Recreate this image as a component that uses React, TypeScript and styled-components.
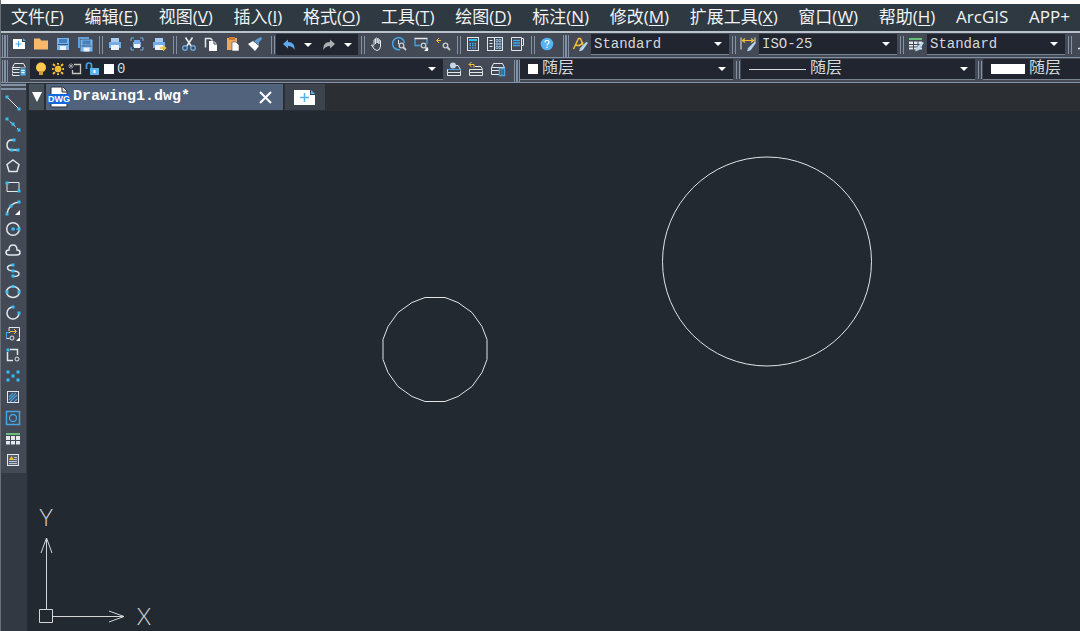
import React from "react";
import styled, { createGlobalStyle } from "styled-components";

const mono = `"Liberation Mono", "Noto Sans CJK SC", monospace`;

const Global = createGlobalStyle`
  *, *::before, *::after { box-sizing: border-box; }
  body { margin: 0; background: #222931; }
  button, select { font: inherit; color: inherit; border: 0; background: none; padding: 0; margin: 0; }
`;

const Page = styled.div`
  display: flex;
  flex-direction: column;
  min-height: 100vh;
  overflow: hidden;
  border-left: 1px solid #6a6f75;
  color: #e6e9ec;
  font-family: "Open Sans", "Noto Sans CJK SC", sans-serif;
`;

const MenuBar = styled.nav`
  height: 33px;
  border-top: 4px solid #fdfdfd;
  border-bottom: 2px solid #b9c3c9;
  background: #2f3941;
  overflow: hidden;
`;

const MenuList = styled.div`
  display: flex;
  justify-content: space-between;
  max-width: 1080px;
  padding: 0 10px;
`;

const MenuItem = styled.button`
  flex: none;
  font-size: 17px;
  line-height: 26px;
  white-space: nowrap;
  color: #f1f3f4;
  u { text-decoration-thickness: 1px; text-underline-offset: 2px; }
`;

const Toolbar = styled.div`
  display: flex;
  align-items: stretch;
  height: 25px;
  background: #434a55;
  border-bottom: 1px solid #8290a6;
  overflow: hidden;
  &:last-of-type { border-bottom-color: #353a42; }
`;

const Grip = styled.span<{ $gap?: number }>`
  flex: none;
  width: 7px;
  height: 22px;
  margin-top: 2px;
  margin-left: ${(p) => p.$gap ?? 0}px;
  background: linear-gradient(90deg, transparent 1px, #8292a6 1px, #8292a6 2px, transparent 2px, transparent 3px, #8292a6 3px, #8292a6 5px, transparent 5px, transparent 6px, #8292a6 6px);
`;

const Separator = styled.span<{ $w?: number }>`
  flex: none;
  width: ${(p) => p.$w ?? 8}px;
  display: flex;
  justify-content: flex-end;
  padding-right: 1px;
  &::after {
    content: "";
    width: 4px;
    height: 18px;
    margin-top: 3px;
    border: solid #8292a6;
    border-width: 0 1px;
  }
`;

const ToolButton = styled.button<{ $w?: number }>`
  flex: none;
  display: flex;
  align-items: center;
  justify-content: center;
  width: ${(p) => p.$w ?? 22}px;
  height: 22px;
`;

const History = styled.div`
  display: flex;
  flex: none;
  height: 21px;
  margin-top: 1px;
  padding-right: 6px;
  background: #20252f;
`;

const Field = styled.label<{ $w: number; $gap?: number; $pad?: number }>`
  flex: 1 0 ${(p) => p.$w}px;
  display: flex;
  align-items: center;
  gap: ${(p) => p.$gap ?? 1}px;
  height: 21px;
  margin-top: 1px;
  padding-left: ${(p) => p.$pad ?? 3}px;
  background: #20252f;
  border-bottom: 1px solid #78838f;
`;

const SelectBox = styled.span`
  flex: 1;
  display: grid;
  align-items: center;
  > * { grid-area: 1 / 1; }
  > svg { justify-self: end; margin-right: 7px; pointer-events: none; }
`;

const Select = styled.select<{ $size: number }>`
  appearance: none;
  width: 100%;
  height: 20px;
  outline: none;
  color: #d5d8dc;
  font-family: ${mono};
  font-size: ${(p) => p.$size}px;
  line-height: 20px;
`;

const Swatch = styled.span<{ $w: number }>`
  flex: none;
  width: ${(p) => p.$w}px;
  height: 10px;
  margin-left: 3px;
  background: #fff;
`;

const LineSample = styled.span`
  flex: none;
  width: 57px;
  height: 1px;
  margin-left: 3px;
  background: #d8dadd;
`;

const Body = styled.div`
  flex: 1;
  display: flex;
`;

const Rail = styled.aside`
  flex: none;
  width: 27px;
  background: #323943;
  border-right: 1px solid #272c33;
`;

const Palette = styled.div`
  display: flex;
  flex-direction: column;
  width: 25px;
  padding-bottom: 3px;
  background: #434a55;
  &::before {
    content: "";
    height: 6px;
    margin: 1px 0 2px;
    border: solid #8292a6;
    border-width: 2px 0;
  }
`;

const PaletteButton = styled.button`
  display: flex;
  align-items: center;
  justify-content: center;
  width: 24px;
  height: 21px;
`;

const Workspace = styled.main`
  flex: 1;
  min-width: 0;
  display: flex;
  flex-direction: column;
  background: #222931;
`;

const TabStrip = styled.div`
  display: flex;
  gap: 2px;
  height: 28px;
  padding: 1px 0 1px 1px;
  background: #2b2e32;
`;

const TabMenu = styled.button`
  width: 15px;
  display: flex;
  align-items: center;
  justify-content: center;
  background: #47515a;
`;

const Tab = styled.div`
  display: flex;
  align-items: center;
  width: 237px;
  padding: 0 7px 0 2px;
  background: #50627c;
`;

const TabTitle = styled.button`
  flex: 1;
  display: flex;
  align-items: center;
  gap: 3px;
  color: #fff;
  font-family: ${mono};
  font-size: 15px;
  font-weight: 700;
  line-height: 20px;
`;

const NewTab = styled.button`
  width: 40px;
  display: flex;
  align-items: center;
  justify-content: center;
  background: #3d434c;
`;

const Canvas = styled.div`
  flex: 1;
  position: relative;
  overflow: hidden;
`;

const Drawing = styled.svg`
  position: absolute;
  inset: 0;
  width: 100%;
  height: 100%;
`;

const Ucs = styled.svg`
  position: absolute;
  left: 4px;
  bottom: 0;
  text { font-family: Lato, sans-serif; font-size: 23px; font-weight: 300; fill: #d4d6d8; }
`;

const W = "#e4e7ea";
const B = "#45a5e6";
const C = "#35bdf6";
const Y = "#f5bd35";

const dot = (x: number, y: number) => <rect x={x - 1.5} y={y - 1.5} width="3" height="3" fill={C} stroke="none" />;
const layers = (
  <>
    <path d="M3.500 2.500h9l2 4h-13z" />
    <path d="M1.500 6.500v2h13M1.500 9.500v2h13M1.500 12.500v2h13" />
  </>
);
const floppy = (
  <>
    <path d="M2 2h12v12H2z" fill="#79b4f0" stroke="none" />
    <path d="M4 3h8v4H4z" fill="#477fb9" stroke="none" />
    <path d="M3 8.500h10" stroke="#3b5270" />
    <path d="M5 10h6v4H5z" fill="#e8f1fb" stroke="none" />
  </>
);
const printer = (
  <>
    <path d="M4 2h8v4H4z" fill="#a9cdf0" stroke="none" />
    <path d="M2 6h12v6H2z" fill="#76ade6" stroke="none" />
    <path d="M4 9h8v5H4z" fill="#edf4fb" stroke="none" />
  </>
);
const magnifier = (
  <>
    <circle cx="10.500" cy="9.500" r="2.300" fill="#434a55" stroke="#c9ced3" strokeWidth="1.300" />
    <path d="M12 11l3 3" stroke="#c9ced3" strokeWidth="1.800" />
  </>
);
const brush = <path d="M14.500 6l1 1-5 7-3 1 1-3z" fill="#b9d8f3" stroke="#b9d8f3" strokeWidth=".6" />;

const icons: Record<string, React.ReactNode> = {
  new: <><path d="M2 3h9v3h3v7H2z" fill="#fff" stroke="none" /><path d="M12 2l3 3h-3z" fill={B} stroke="none" /><path d="M7.500 5v6M4.500 8h6" stroke={B} /></>,
  open: <path d="M1 2.500h6l1 2h7v9H1z" fill="#f8b96c" stroke="none" />,
  save: floppy,
  saveAll: <><path d="M1 1h11v2H3v9H1z" fill="#5f9edb" stroke="none" /><g transform="translate(1.500 1.500)">{floppy}</g></>,
  print: printer,
  preview: <><path d="M2 5V2h3M11 2h3v3M14 11v3h-3M5 14H2v-3" stroke="#6daee5" /><path d="M5 4h6v2H5zM4 6h8v5H4z" fill="#79aee2" stroke="none" /><path d="M5 8h6v4H5z" fill="#eef5fb" stroke="none" /></>,
  publish: <>{printer}<path d="M9 12h5m-2-2.500l2.500 2.500L12 14.500" stroke={Y} strokeWidth="1.500" /></>,
  cut: <><path d="M4.500 1.500l6 9M11.500 1.500l-6 9" stroke="#edf0f2" strokeWidth="1.500" /><circle cx="4" cy="12" r="2.300" stroke="#65a9df" strokeWidth="1.400" /><circle cx="12" cy="12" r="2.300" stroke="#65a9df" strokeWidth="1.400" /></>,
  copy: <><path d="M2.500 11.500v-9h5l2 2" strokeWidth="1.500" /><path d="M6 5h5l3 3v7H6z" fill="#fff" stroke="none" /><path d="M11 5v3h3" stroke="#434a55" /></>,
  paste: <><path d="M2 2h10v12H2z" fill="#eda75f" stroke="none" /><path d="M4 1h6v3H4z" fill="#c57b36" stroke="none" /><path d="M7 6h4l3 3v6H7z" fill="#fff" stroke="#434a55" strokeWidth=".6" /></>,
  match: <><path d="M1 8l5-3 6 5-4 5z" fill="#fff" stroke="none" /><path d="M7 5l3-2 4-2 1 2-3 3 0 3z" fill="#5d9bd2" stroke="none" /></>,
  undo: <path d="M2 7l5-4.500V5c5 0 7 3 6.500 8C12 10 10 9 7 9v2.500z" fill="#5ea9ed" stroke="none" />,
  redo: <path d="M14 7L9 2.500V5C4 5 2 8 2.500 13 4 10 6 9 9 9v2.500z" fill="#abb0b0" stroke="none" />,
  hand: <path d="M5 9V4q1-1 1.500 0v4M6.500 7V2.500q1-1 1.700 0V7M8.200 7V3q1-1 1.700 0v4.500M9.900 8V4.500q1-1 1.600 0V10q0 4-3.500 4.500Q5 14.500 2.500 9q1-1 2.500 1.500" />,
  zoomTime: <><path d="M9 13.500A6 6 0 1 1 13.500 7" stroke={B} strokeWidth="1.500" /><path d="M7.500 4v4" />{magnifier}</>,
  zoomWindow: <><path d="M14 3v5M2 3v6.500h5" stroke={B} strokeWidth="1.300" /><path d="M1.500 2.500h13" strokeWidth="1.500" />{magnifier}<path d="M15 11v4h-4z" fill="#fff" stroke="none" /></>,
  zoomPrev: <><path d="M2 4.500h4M4 2L1.500 4.500 4 7" stroke={Y} />{magnifier}</>,
  calc: <><rect x="2.500" y="1.500" width="11" height="13" /><path d="M4 4h8" stroke={C} strokeWidth="2" /><path d="M4.500 7.500h7M4.500 9.500h7M4.500 12h7" strokeDasharray="1.500 1" stroke={B} strokeWidth="1.500" /></>,
  center: <><rect x=".5" y="1.500" width="15" height="13" /><path d="M7.500 2v12" /><path d="M2.500 4.500h3M2.500 7.500h3M2.500 10.500h3" /><path d="M9 3.500h2v2H9zM12 3.500h2v2h-2zM9 7h2v2H9zM12 7h2v2h-2zM9 10.500h2v2H9zM12 10.500h2v2h-2z" stroke="#9fc6e8" strokeWidth=".8" /></>,
  props: <><path d="M2.500 1.500h10v13h-10zM12.500 2.500h2v7h-2" /><path d="M4 4.500h7M4 7h7M4 9.500h7" stroke={B} strokeWidth="1.500" /></>,
  help: <><circle cx="8" cy="8" r="6.300" fill="#55b3f4" stroke="none" /><path d="M6 6.500q0-2 2-2t2 1.700q0 1-1 1.600-1 .7-1 1.700M8 10.700v1.300" stroke="#fff" strokeWidth="1.200" /></>,
  textStyle: <><path d="M1.500 13L6.500 2.500h2L11 9M4 9q4 2 7-3" stroke={Y} strokeWidth="1.500" />{brush}</>,
  dimStyle: <><path d="M1 1.500v12M15 1.500v5" /><path d="M2.500 4.500h11M5 2.500l-2.500 2L5 6.500M11 2.500l2.500 2-2.500 2" stroke={Y} strokeWidth="1.200" />{brush}</>,
  tableStyle: <><path d="M1 3h13" stroke="#67bd7a" strokeWidth="2" /><path d="M1 5.500h13v8H1z" fill={W} stroke="none" /><path d="M1 8.500h13M1 11h13M5.500 5v9M10 5v9" stroke="#434a55" />{brush}</>,
  leader: <path d="M2 12.500h8L5 7l4-5" strokeWidth="1.500" />,
  layerProps: <>{layers}<path d="M9 7h6v8H9z" fill="#55b3f4" stroke="#434a55" /><path d="M10.500 9.500h3M10.500 11.500h3" stroke="#fff" /></>,
  bulb: <><circle cx="8" cy="6.500" r="5" fill="#ffc94d" stroke="none" /><path d="M6 10h4v4H6z" fill="#d39e35" stroke="none" /></>,
  sun: <><path d="M8 2v12M2 8h12M3 3l10 10M13 3L3 13" stroke={Y} strokeWidth="2" /><circle cx="8" cy="8" r="4" fill={Y} stroke="#20252f" /></>,
  freeze: <><path d="M7 3.500h6.500v9h-8V9" stroke="#c8c7c0" strokeWidth="1.300" /><path d="M4 2v6M1 5h6M2 3l4 4M6 3L2 7" stroke="#a8a9a8" strokeWidth=".8" /></>,
  lock: <><path d="M2.500 8V4q0-2 2.500-2t2.500 2v4" stroke={B} strokeWidth="1.700" /><path d="M6 7h9v7H6z" fill="#58b7f3" stroke="none" /><path d="M10.500 9v3" stroke="#fff" strokeWidth="2" /></>,
  layerCurrent: <><path d="M5 4.500h7l2.500 4h-13" /><path d="M1.500 8.500h13" stroke={B} /><path d="M1.500 8.500v3h13M1.500 11.500v3h13v-5" /><circle cx="7" cy="4.500" r="3" fill="#c4d8ea" stroke="none" /></>,
  layerPrev: <><path d="M7 5.500h6l1.500 3h-13M1.500 8.500v3h13M1.500 11.500v3h13v-5" /><path d="M1 3.500h5v3M3.500 1L1 3.500 3.500 6" stroke={Y} /></>,
  layerState: <><path d="M3.500 2.500h9l2 4h-13zM1.500 6.500v3H9M1.500 9.500v4H9" /><path d="M9.500 7.500h5v7h-5z" fill="#434a55" stroke={B} strokeWidth="1.500" /><path d="M12 8v6" stroke={B} /></>,
  line: <><path d="M2 2l12 12" />{dot(2, 2)}{dot(14, 14)}</>,
  xline: <><path d="M1 2l13 12" strokeDasharray="3 2" />{dot(2, 3)}{dot(8, 8)}{dot(14, 14)}</>,
  pline: <><path d="M9 3H7q-5 0-5 5t5 5h6" strokeWidth="1.500" />{dot(9, 3)}{dot(7, 13)}{dot(13, 13)}</>,
  polygon: <path d="M8 2l6 4.500L12 13.500H4L2 6.500z" strokeWidth="1.500" />,
  rect: <><path d="M2 3.500h12v9H2z" />{dot(2, 4)}{dot(14, 12)}</>,
  arc: <><path d="M2 14Q4 3 14 2" strokeWidth="1.500" />{dot(2, 14)}{dot(6, 6)}{dot(14, 2)}<path d="M15 10v5h-5z" fill="#fff" stroke="none" /></>,
  circle: <><circle cx="8" cy="8" r="6.300" strokeWidth="1.500" /><path d="M8 8h6" stroke={C} strokeDasharray="2 1" />{dot(8, 8)}{dot(14, 8)}</>,
  cloud: <path d="M4 13q-3 0-3-2.500T4 8q0-5 4-5t4 5q3 0 3 2.500T12 13z" strokeWidth="1.500" />,
  spline: <><path d="M8 2Q2.500 2 2.500 4.800T8 8q6 0 6 2.800T8 13.500" strokeWidth="1.500" />{dot(8, 2)}{dot(8, 8)}{dot(8, 13)}</>,
  ellipse: <><ellipse cx="8" cy="8" rx="6.500" ry="5.500" strokeWidth="1.500" />{dot(8, 2.5)}{dot(2, 8)}{dot(14, 8)}</>,
  ellipseArc: <><path d="M8 2a6 6 0 1 0 6 6" strokeWidth="1.500" />{dot(8, 2)}{dot(14, 8)}</>,
  insert: <><path d="M4 5V1.500h10.500V11M1 6.500h4M1.500 6.500v6h3" /><path d="M1.500 12.500v-6H4" stroke={B} /><circle cx="7" cy="12" r="2" /><path d="M5 5.500h6M9 3l2.500 2.500L9 8" stroke={Y} /><path d="M15 11v4h-4z" fill="#fff" stroke="none" /></>,
  block: <><path d="M5 2.500h7.500V8M2.500 5v8.500H8" strokeWidth="1.500" /><circle cx="12" cy="12" r="2" />{dot(3, 3)}</>,
  point: <>{dot(3, 4)}{dot(13, 4)}{dot(8, 8)}{dot(3, 12)}{dot(13, 12)}</>,
  hatch: <><rect x="2.500" y="2.500" width="11" height="11" /><path d="M4 8l4-4M4 11l7-7M5 13l7-7M9 13l3-3" stroke={B} strokeWidth="1.200" /></>,
  region: <><rect x="1.500" y="1.500" width="13" height="13" stroke={B} strokeWidth="1.500" /><circle cx="8" cy="8" r="3.500" stroke={B} strokeWidth="1.300" /></>,
  table: <><path d="M1 3h14" stroke="#67bd7a" strokeWidth="2" /><path d="M1 5h14v8.500H1z" fill={W} stroke="none" /><path d="M1 9.500h14M5.500 5v9M10.500 5v9" stroke="#434a55" /></>,
  mtext: <><rect x="2.500" y="2.500" width="11" height="11" fill="#59616b" /><path d="M4 8l2.500-4L9 8z" fill={Y} stroke="none" /><path d="M9 5.500h3M9 7.500h3M4 9.500h8M4 11.500h8" stroke="#b5c3d6" /></>,
};

const Icon = ({ name }: { name: string }) => (
  <svg width="16" height="16" viewBox="0 0 16 16" fill="none" stroke={W} aria-hidden="true">
    {icons[name]}
  </svg>
);

const Caret = () => (
  <svg width="8" height="4" viewBox="0 0 8 4" fill="#fff" aria-hidden="true">
    <path d="M0 0h8L4 4z" />
  </svg>
);

const Tools = ({ names }: { names: string[] }) => (
  <>
    {names.map((n) => (
      <ToolButton key={n} aria-label={n}>
        <Icon name={n} />
      </ToolButton>
    ))}
  </>
);

interface ComboProps {
  label: string;
  value: string;
  width: number;
  size?: number;
  gap?: number;
  pad?: number;
  children?: React.ReactNode;
}

const Combo = ({ label, value, width, size = 14, gap, pad, children }: ComboProps) => (
  <Field $w={width} $gap={gap} $pad={pad}>
    {children}
    <SelectBox>
      <Select $size={size} aria-label={label}>
        <option>{value}</option>
      </Select>
      <Caret />
    </SelectBox>
  </Field>
);

const menus: [string, string?][] = [
  ["文件", "F"], ["编辑", "E"], ["视图", "V"], ["插入", "I"], ["格式", "O"], ["工具", "T"], ["绘图", "D"],
  ["标注", "N"], ["修改", "M"], ["扩展工具", "X"], ["窗口", "W"], ["帮助", "H"], ["ArcGIS"], ["APP+"],
];

const drawTools = [
  "line", "xline", "pline", "polygon", "rect", "arc", "circle", "cloud", "spline", "ellipse",
  "ellipseArc", "insert", "block", "point", "hatch", "region", "table", "mtext",
];

export default function App() {
  return (
    <Page>
      <Global />
      <MenuBar>
        <MenuList>
          {menus.map(([text, key]) => (
            <MenuItem key={text}>
              {text}
              {key && <>(<u>{key}</u>)</>}
            </MenuItem>
          ))}
        </MenuList>
      </MenuBar>

      <Toolbar>
        <Grip />
        <Tools names={["new", "open", "save", "saveAll"]} />
        <Separator />
        <Tools names={["print", "preview", "publish"]} />
        <Separator />
        <Tools names={["cut", "copy", "paste", "match"]} />
        <Separator $w={10} />
        <History>
          <ToolButton $w={26} aria-label="undo"><Icon name="undo" /></ToolButton>
          <ToolButton $w={12} aria-label="undo list"><Caret /></ToolButton>
          <ToolButton $w={30} aria-label="redo"><Icon name="redo" /></ToolButton>
          <ToolButton $w={8} aria-label="redo list"><Caret /></ToolButton>
        </History>
        <Separator />
        <Tools names={["hand", "zoomTime", "zoomWindow", "zoomPrev"]} />
        <Separator />
        <Tools names={["calc", "center", "props"]} />
        <Separator />
        <Tools names={["help"]} />
        <Grip $gap={4} />
        <Tools names={["textStyle"]} />
        <Combo label="文字样式" value="Standard" width={138} />
        <Separator />
        <Tools names={["dimStyle"]} />
        <Combo label="标注样式" value="ISO-25" width={138} />
        <Separator />
        <Tools names={["tableStyle"]} />
        <Combo label="表格样式" value="Standard" width={138} />
        <Separator />
        <Tools names={["leader"]} />
      </Toolbar>

      <Toolbar>
        <Grip />
        <Tools names={["layerProps"]} />
        <Combo label="图层" value="0" width={413}>
          <Icon name="bulb" />
          <Icon name="sun" />
          <Icon name="freeze" />
          <Icon name="lock" />
          <Swatch $w={10} />
          <span />
          <span />
        </Combo>
        <Tools names={["layerCurrent", "layerPrev", "layerState"]} />
        <Grip $gap={4} />
        <Combo label="颜色" value="随层" width={213} size={16} gap={4} pad={5}>
          <Swatch $w={10} />
        </Combo>
        <Separator />
        <Combo label="线型" value="随层" width={234} size={16} gap={4} pad={5}>
          <LineSample />
        </Combo>
        <Separator />
        <Combo label="线宽" value="随层" width={212} size={16} gap={4} pad={5}>
          <Swatch $w={34} />
        </Combo>
      </Toolbar>

      <Body>
        <Rail>
          <Palette>
            {drawTools.map((n) => (
              <PaletteButton key={n} aria-label={n}>
                <Icon name={n} />
              </PaletteButton>
            ))}
          </Palette>
        </Rail>
        <Workspace>
          <TabStrip>
            <TabMenu aria-label="tabs">
              <svg width="10" height="10" viewBox="0 0 10 10" fill="#fff"><path d="M0 0h10L5 10z" /></svg>
            </TabMenu>
            <Tab>
              <TabTitle>
                <svg width="22" height="22" viewBox="0 0 22 22">
                  <path d="M3 1h12l4 4v16H3z" fill="#fff" stroke="#2b2f36" />
                  <path d="M14 1v5h5" fill="#cdd0d3" stroke="#2b2f36" />
                  <rect y="8" width="22" height="10" fill="#1668dc" />
                  <text x="11" y="16" textAnchor="middle" fontFamily="Liberation Sans" fontSize="9" fontWeight="700" fill="#fff">DWG</text>
                </svg>
                Drawing1.dwg*
              </TabTitle>
              <ToolButton aria-label="close">
                <svg width="13" height="13" viewBox="0 0 13 13" stroke="#fff" strokeWidth="2"><path d="M1 1l11 11M12 1L1 12" /></svg>
              </ToolButton>
            </Tab>
            <NewTab aria-label="new drawing">
              <svg width="22" height="16" viewBox="0 0 22 16">
                <path d="M0 1h16v5h5v10H0z" fill="#fff" />
                <path d="M17 1l4 4h-4z" fill="#55b3f4" />
                <path d="M10.500 4v9M6 8.500h9" stroke="#55b3f4" strokeWidth="1.500" />
              </svg>
            </NewTab>
          </TabStrip>
          <Canvas>
            <Drawing fill="none" stroke="#e2e4e6">
              <path
                transform="translate(407 238.500)"
                d="M-10-52H10L23-47 37-37 47-23 52-10V10L47 23 37 37 23 47 10 52H-10L-23 47-37 37-47 23-52 10V-10L-47-23-37-37-23-47z"
              />
              <circle cx="739" cy="150.500" r="104.500" />
            </Drawing>
            <Ucs width="128" height="127" viewBox="0 0 128 127" fill="none" stroke="#d4d6d8">
              <path d="M7.500 105.500h13v13h-13zM14.500 105V34M9 49l5.500-15L20 49M21 112.500h71M77 107l15 5.500-15 5.500" />
              <text x="14" y="22" textAnchor="middle" stroke="none">Y</text>
              <text x="112" y="121" textAnchor="middle" stroke="none">X</text>
            </Ucs>
          </Canvas>
        </Workspace>
      </Body>
    </Page>
  );
}
